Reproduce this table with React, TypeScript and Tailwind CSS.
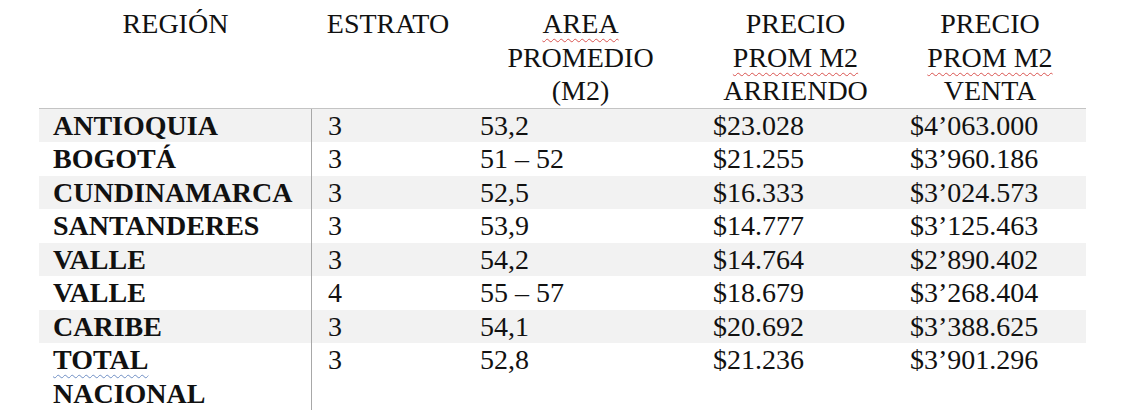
const cols = "grid grid-cols-[273px_152px_233px_197px_192px]"

interface Row {
  region: React.ReactNode
  estrato: string
  area: string
  arriendo: string
  venta: string
}

const rows: Row[] = [
  { region: "ANTIOQUIA", estrato: "3", area: "53,2", arriendo: "$23.028", venta: "$4’063.000" },
  { region: "BOGOTÁ", estrato: "3", area: "51 – 52", arriendo: "$21.255", venta: "$3’960.186" },
  { region: "CUNDINAMARCA", estrato: "3", area: "52,5", arriendo: "$16.333", venta: "$3’024.573" },
  { region: "SANTANDERES", estrato: "3", area: "53,9", arriendo: "$14.777", venta: "$3’125.463" },
  { region: "VALLE", estrato: "3", area: "54,2", arriendo: "$14.764", venta: "$2’890.402" },
  { region: "VALLE", estrato: "4", area: "55 – 57", arriendo: "$18.679", venta: "$3’268.404" },
  { region: "CARIBE", estrato: "3", area: "54,1", arriendo: "$20.692", venta: "$3’388.625" },
  {
    region: (
      <>
        <span className="underline decoration-wavy decoration-[#6f8fc4] decoration-1 underline-offset-[5px]">TOTAL</span>
        <br />
        NACIONAL
      </>
    ),
    estrato: "3",
    area: "52,8",
    arriendo: "$21.236",
    venta: "$3’901.296",
  },
]

function Spell({ children }: { children: React.ReactNode }) {
  return (
    <span className="underline decoration-wavy decoration-[#d9534f] decoration-1 underline-offset-[5px]">
      {children}
    </span>
  )
}

export default function App() {
  return (
    <div className="w-[1144px] h-[415px] bg-white overflow-hidden font-['Liberation_Serif','Times_New_Roman',serif] text-[28px] leading-[33.5px] text-[#111]">
      <div className="ml-[39px] w-[1047px] pt-[7px]">
        <div className={`${cols} text-center`}>
          <div>REGIÓN</div>
          <div>ESTRATO</div>
          <div>
            <Spell>AREA</Spell>
            <br />
            PROMEDIO
            <br />
            (M2)
          </div>
          <div>
            PRECIO
            <br />
            <Spell>PROM M2</Spell>
            <br />
            ARRIENDO
          </div>
          <div>
            PRECIO
            <br />
            <Spell>PROM M2</Spell>
            <br />
            VENTA
          </div>
        </div>
        <div className="border-t border-[#c4c4c4]">
          {rows.map((r, i) => (
            <div key={i} className={`${cols} ${i % 2 === 0 && i < 7 ? "bg-[#f2f2f2]" : "bg-white"}`}>
              <div className="pl-[14px] font-bold border-r border-[#a8a8a8]">{r.region}</div>
              <div className="pl-4">{r.estrato}</div>
              <div className="pl-4">{r.area}</div>
              <div className="pl-4">{r.arriendo}</div>
              <div className="pl-4">{r.venta}</div>
            </div>
          ))}
        </div>
      </div>
    </div>
  )
}
